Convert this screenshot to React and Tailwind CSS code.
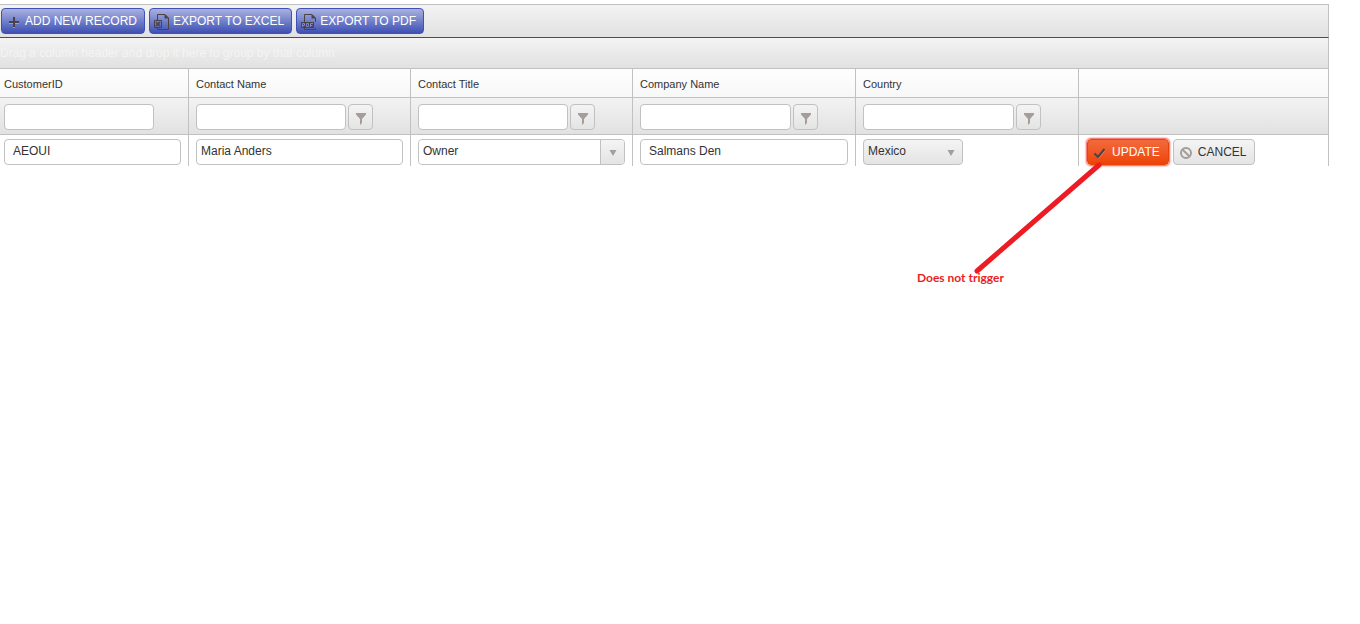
import React from "react";

const FIELD =
  "block h-[26px] rounded border border-[#c1c1c1] bg-white pb-0.5 text-xs text-[#333] outline-none";
const GREY_BUTTON =
  "rounded border border-[#c1c1c1] bg-linear-to-b from-[#f4f4f4] to-[#e4e4e4] text-[#333]";
const CELL = "border-l border-[#c1c1c1] px-[7px] first:border-l-0 first:pl-1 last:border-r";

const COLUMNS = [
  { title: "CustomerID", filterButton: false, width: "w-[150px]" },
  { title: "Contact Name", filterButton: true, width: "w-[150px]" },
  { title: "Contact Title", filterButton: true, width: "w-[150px]" },
  { title: "Company Name", filterButton: true, width: "w-[151px]" },
  { title: "Country", filterButton: true, width: "w-[151px]" },
];

function PlusIcon() {
  return (
    <svg width="16" height="16" viewBox="0 0 16 16" aria-hidden="true">
      <path d="M8 4v10M3 9h10" stroke="#fff" strokeOpacity=".3" strokeWidth="2" />
      <path d="M8 3v10M3 8h10" stroke="#4c4245" strokeWidth="2" />
    </svg>
  );
}

function ExcelIcon() {
  return (
    <svg width="16" height="16" viewBox="0 0 16 16" fill="none" aria-hidden="true">
      <path d="M3.500 6V.5H11L14.500 4v11.500h-11V14" stroke="#4c4245" />
      <path d="M10.500 0v4.500H15z" fill="#4c4245" />
      <path d="M.5 6.500h7v7h-7z" stroke="#4c4245" />
      <path d="M2 8l4 4M6 8l-4 4" stroke="#4c4245" strokeWidth="1.600" />
    </svg>
  );
}

function PdfIcon() {
  return (
    <svg width="16" height="16" viewBox="0 0 16 16" fill="none" aria-hidden="true">
      <path d="M3.500 8V.5H11L14.500 4v4M3.500 14v1.500h11V14" stroke="#4c4245" />
      <path d="M10.500 0v4.500H15z" fill="#4c4245" />
      <path d="M0 8h13v6H0z" fill="#4c4245" />
      <path
        d="M1.500 13V9.500h2v2h-2M5.500 9.500h2v3h-2zM9.500 13V9.500H12M9.500 11.500h2"
        stroke="#7f87c4"
      />
    </svg>
  );
}

function FunnelIcon() {
  return (
    <svg width="12" height="12" viewBox="0 0 12 12" aria-hidden="true">
      <path d="M1 0h10v1.500L7 6v4L5 12V6L1 1.500z" fill="#a49d9a" />
    </svg>
  );
}

function ArrowIcon() {
  return (
    <svg width="8" height="6" viewBox="0 0 8 6" aria-hidden="true">
      <path d="M.5 0h7L4 6z" fill="#a49d9a" />
    </svg>
  );
}

function CheckIcon() {
  return (
    <svg width="14" height="14" viewBox="0 0 14 14" fill="none" aria-hidden="true">
      <path d="M2 8.500l3.500 3.500L12 4" stroke="#fff" strokeOpacity=".25" strokeWidth="1.500" />
      <path d="M1.500 7.500L5 11l6.500-8" stroke="#4c4245" strokeWidth="2" />
    </svg>
  );
}

function CancelIcon() {
  return (
    <svg width="14" height="14" viewBox="0 0 14 14" fill="none" aria-hidden="true">
      <circle cx="7" cy="7" r="5" stroke="#a49d9a" strokeWidth="2" />
      <path d="M3.500 3.500l7 7" stroke="#a49d9a" strokeWidth="2" />
    </svg>
  );
}

function ToolbarButton({ icon, children }) {
  return (
    <button
      type="button"
      className="flex h-[26px] items-center gap-[3px] rounded border border-[#3f51b5] bg-linear-to-b from-[#abb1de] to-[#3f4fb4] pr-[7px] pl-1 text-xs whitespace-nowrap text-white"
    >
      <span className="pt-0.5">{icon}</span>
      <span className="pb-px">{children}</span>
    </button>
  );
}

export default function App() {
  return (
    <main className="relative min-h-screen bg-white pt-1 pr-[31px] font-['Liberation_Sans',Arial,sans-serif] text-xs text-[#333]">
      <div className="flex gap-1 border-t border-r border-b border-[#c1c1c1] border-b-[#3a4798] bg-linear-to-b from-[#f3f3f3] to-[#e1e1e1] px-px py-[3px]">
        <ToolbarButton icon={<PlusIcon />}>ADD NEW RECORD</ToolbarButton>
        <ToolbarButton icon={<ExcelIcon />}>EXPORT TO EXCEL</ToolbarButton>
        <ToolbarButton icon={<PdfIcon />}>EXPORT TO PDF</ToolbarButton>
      </div>
      <div className="h-[31px] border-r border-b border-[#c1c1c1] bg-linear-to-b from-[#f3f3f3] to-[#e1e1e1] leading-[30px] text-[#f4f4f4]">
        Drag a column header and drop it here to group by that column
      </div>

      <table className="w-full table-fixed border-separate border-spacing-0">
        <colgroup>
          <col className="w-[188px]" />
          <col className="w-[222px]" />
          <col className="w-[222px]" />
          <col className="w-[223px]" />
          <col className="w-[223px]" />
          <col />
        </colgroup>
        <thead>
          <tr className="h-[29px] bg-linear-to-b from-[#fefefe] to-[#f7f7f7]">
            {COLUMNS.map((column) => (
              <th
                key={column.title}
                scope="col"
                className={`${CELL} border-b pt-0.5 text-left text-[11px] font-normal`}
              >
                {column.title}
              </th>
            ))}
            <td className={`${CELL} border-b`} />
          </tr>
          <tr className="h-[37px] bg-linear-to-b from-[#f3f3f3] to-[#e1e1e1]">
            {COLUMNS.map((column) => (
              <td key={column.title} className={`${CELL} border-b pt-0.5`}>
                <div className="flex gap-0.5">
                  <input
                    type="text"
                    aria-label={`Filter ${column.title}`}
                    className={`${FIELD} ${column.width} px-1`}
                  />
                  {column.filterButton && (
                    <button
                      type="button"
                      aria-label={`${column.title} filter options`}
                      className={`${GREY_BUTTON} flex h-[26px] w-[25px] items-center justify-center pt-1`}
                    >
                      <FunnelIcon />
                    </button>
                  )}
                </div>
              </td>
            ))}
            <td className={`${CELL} border-b`} />
          </tr>
        </thead>
        <tbody>
          <tr className="h-[31px]">
            <td className={`${CELL} pt-[3px]`}>
              <input aria-label="CustomerID" defaultValue="AEOUI" className={`${FIELD} w-full px-2`} />
            </td>
            <td className={`${CELL} pt-[3px]`}>
              <input aria-label="Contact Name" defaultValue="Maria Anders" className={`${FIELD} w-full px-1`} />
            </td>
            <td className={`${CELL} pt-[3px]`}>
              <div className="flex h-[26px] rounded border border-[#c1c1c1]">
                <input
                  aria-label="Contact Title"
                  defaultValue="Owner"
                  className="min-w-0 flex-1 rounded-l bg-white px-1 pb-0.5 text-xs outline-none"
                />
                <button
                  type="button"
                  aria-label="Open contact titles"
                  className="flex w-6 items-center justify-center rounded-r-[3px] border-l border-[#c1c1c1] bg-linear-to-b from-[#f4f4f4] to-[#e4e4e4] pt-0.5"
                >
                  <ArrowIcon />
                </button>
              </div>
            </td>
            <td className={`${CELL} pt-[3px]`}>
              <input aria-label="Company Name" defaultValue="Salmans Den" className={`${FIELD} w-full px-2`} />
            </td>
            <td className={`${CELL} pt-[3px]`}>
              <div className="grid w-[100px] items-center">
                <select
                  aria-label="Country"
                  defaultValue="Mexico"
                  className={`${GREY_BUTTON} col-start-1 row-start-1 h-[26px] w-full appearance-none px-1 pb-0.5 text-xs outline-none`}
                >
                  <option>Mexico</option>
                </select>
                <span className="pointer-events-none col-start-1 row-start-1 justify-self-end pt-0.5 pr-2">
                  <ArrowIcon />
                </span>
              </div>
            </td>
            <td className={`${CELL} pt-[3px]`}>
              <div className="flex gap-1 pl-px">
                <button
                  type="button"
                  className="flex h-[26px] items-center gap-[5px] rounded border border-[#e8440a] bg-linear-to-b from-[#f26a3a] to-[#ee4300] pr-2 pl-[5px] text-xs text-white shadow-[0_0_2px_1px_#f4514a]"
                >
                  <span className="pt-0.5"><CheckIcon /></span>
                  UPDATE
                </button>
                <button
                  type="button"
                  className={`${GREY_BUTTON} flex h-[26px] items-center gap-[5px] pr-2 pl-[5px] text-xs`}
                >
                  <span className="pt-0.5"><CancelIcon /></span>
                  CANCEL
                </button>
              </div>
            </td>
          </tr>
        </tbody>
      </table>

      <svg
        className="pointer-events-none absolute top-[160px] left-[970px]"
        width="136"
        height="116"
        viewBox="0 0 136 116"
        aria-hidden="true"
      >
        <path d="M7 111L129 5" stroke="#ed1c24" strokeWidth="5" strokeLinecap="round" />
      </svg>
      <p className="absolute top-[270px] left-[917px] font-[Lato,sans-serif] text-xs font-bold whitespace-nowrap text-[#ed1c24]">
        Does not trigger
      </p>
    </main>
  );
}
